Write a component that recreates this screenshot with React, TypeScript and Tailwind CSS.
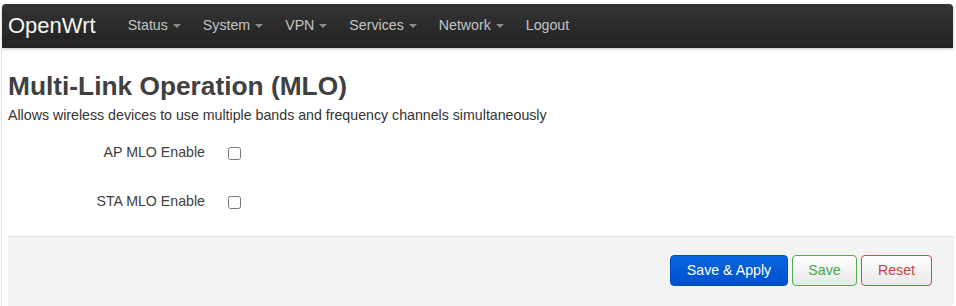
const menu = ['Status', 'System', 'VPN', 'Services', 'Network'];

function Caret() {
  return (
    <span className="ml-[5px] inline-block h-0 w-0 border-x-[4px] border-t-[4px] border-x-transparent border-t-[#8a8a8a] align-middle" />
  );
}

function CheckRow({ label }: { label: string }) {
  return (
    <div className="flex h-[20px] items-center">
      <label className="w-[197px] text-right text-[14.2px] text-[#404040]">{label}</label>
      <input
        type="checkbox"
        className="m-0 ml-[23px] h-[13px] w-[13px]"
      />
    </div>
  );
}

export default function App() {
  return (
    <div className="h-[306px] w-[956px] overflow-hidden bg-white font-['Liberation_Sans',Arial,sans-serif]">
      <header className="relative z-10 ml-[2px] mt-[4px] flex h-[44px] w-[951px] items-center rounded-t-[4px] bg-gradient-to-b from-[#343434] to-[#222] shadow-[0_1px_3px_rgba(0,0,0,0.25)]">
        <span className="ml-[6px] text-[22px] leading-none text-[#f4f4f4]">OpenWrt</span>
        <nav className="ml-[32px] flex items-center gap-[22px] text-[14.2px] text-[#c4c4c4]">
          {menu.map((m) => (
            <span key={m} className="flex items-center">
              {m}
              <Caret />
            </span>
          ))}
          <span>Logout</span>
        </nav>
      </header>

      <div className="ml-[1px] h-[258px] w-[953px] border-l border-[#e2e2e2] pl-[6px]">
        <h2 className="pt-[23px] text-[26.3px] font-bold leading-[30px] text-[#404040]">
          Multi-Link Operation (MLO)
        </h2>
        <p className="mt-[4px] text-[14.2px] leading-[20px] text-[#333]">
          Allows wireless devices to use multiple bands and frequency channels simultaneously
        </p>

        <div className="mt-[18px] flex flex-col gap-[29px]">
          <CheckRow label="AP MLO Enable" />
          <CheckRow label="STA MLO Enable" />
        </div>

        <div className="mt-[24px] flex h-[70px] justify-end gap-[4px] rounded-br-[4px] border-t border-[#dedede] bg-[#f3f3f3] pr-[22px] pt-[18px]">
          <button
            type="button"
            className="h-[31px] w-[118px] rounded-[4px] border border-[#004cbf] bg-gradient-to-b from-[#0a66de] to-[#004fcf] text-[14.2px] text-white"
          >
            Save &amp; Apply
          </button>
          <button
            type="button"
            className="h-[31px] w-[65px] rounded-[4px] border border-[#4cb04c] bg-gradient-to-b from-white to-[#e8e8e8] text-[14.2px] text-[#45a845]"
          >
            Save
          </button>
          <button
            type="button"
            className="h-[31px] w-[71px] rounded-[4px] border border-[#d44a4a] bg-gradient-to-b from-white to-[#e8e8e8] text-[14.2px] text-[#c9403f]"
          >
            Reset
          </button>
        </div>
      </div>
    </div>
  );
}
